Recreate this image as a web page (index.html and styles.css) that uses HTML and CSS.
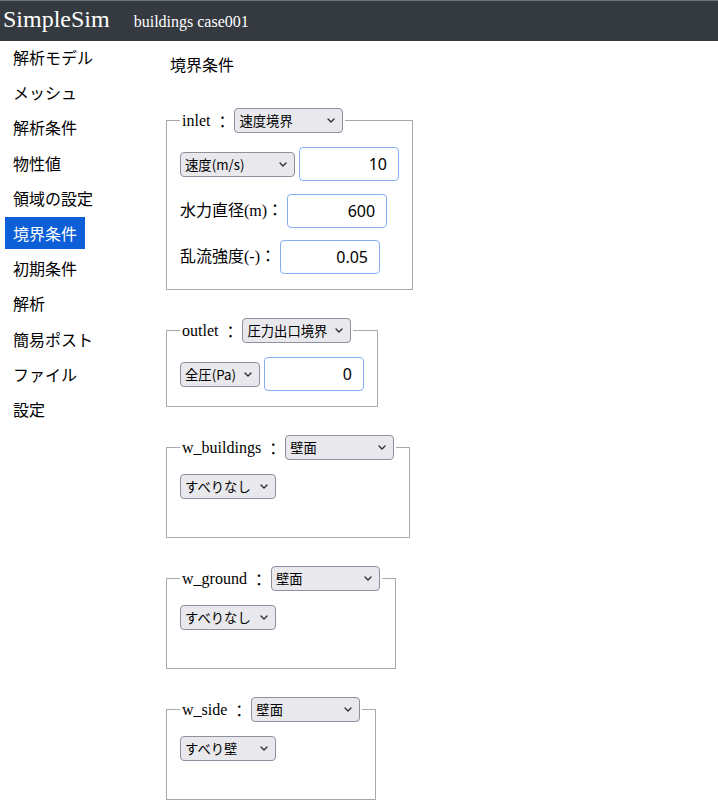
FILE: index.html
```html
<!DOCTYPE html>
<html lang="ja">
<head>
<meta charset="utf-8">
<title>SimpleSim</title>
<link rel="stylesheet" href="styles.css">
</head>
<body>
<header class="topbar">
  <span class="brand">SimpleSim</span>
  <span class="case-name">buildings case001</span>
</header>
<div class="layout">
  <nav class="sidenav">
    <a class="nav-item">解析モデル</a>
    <a class="nav-item">メッシュ</a>
    <a class="nav-item">解析条件</a>
    <a class="nav-item">物性値</a>
    <a class="nav-item">領域の設定</a>
    <a class="nav-item active">境界条件</a>
    <a class="nav-item">初期条件</a>
    <a class="nav-item">解析</a>
    <a class="nav-item">簡易ポスト</a>
    <a class="nav-item">ファイル</a>
    <a class="nav-item">設定</a>
  </nav>
  <main class="content">
    <h1 class="page-title">境界条件</h1>

    <fieldset class="bc">
      <legend class="bc-legend">
        <span class="bc-name">inlet</span><span class="colon">：</span>
        <span class="sel sel-type"><select><option>速度境界</option></select><svg class="chev" width="8" height="5" viewBox="0 0 8 5"><path d="M1 1 L4 4 L7 1"/></svg></span>
      </legend>
      <div class="bc-body">
        <div class="row">
          <span class="sel sel-w115"><select><option>速度(m/s)</option></select><svg class="chev" width="8" height="5" viewBox="0 0 8 5"><path d="M1 1 L4 4 L7 1"/></svg></span>
          <input class="num" type="text" value="10">
        </div>
        <div class="row">
          <label class="lbl">水力直径(m)：</label>
          <input class="num" type="text" value="600">
        </div>
        <div class="row">
          <label class="lbl">乱流強度(-)：</label>
          <input class="num" type="text" value="0.05">
        </div>
      </div>
    </fieldset>

    <fieldset class="bc">
      <legend class="bc-legend">
        <span class="bc-name">outlet</span><span class="colon">：</span>
        <span class="sel sel-type"><select><option>圧力出口境界</option></select><svg class="chev" width="8" height="5" viewBox="0 0 8 5"><path d="M1 1 L4 4 L7 1"/></svg></span>
      </legend>
      <div class="bc-body">
        <div class="row">
          <span class="sel sel-w80"><select><option>全圧(Pa)</option></select><svg class="chev" width="8" height="5" viewBox="0 0 8 5"><path d="M1 1 L4 4 L7 1"/></svg></span>
          <input class="num" type="text" value="0">
        </div>
      </div>
    </fieldset>

    <fieldset class="bc">
      <legend class="bc-legend">
        <span class="bc-name">w_buildings</span><span class="colon">：</span>
        <span class="sel sel-type"><select><option>壁面</option></select><svg class="chev" width="8" height="5" viewBox="0 0 8 5"><path d="M1 1 L4 4 L7 1"/></svg></span>
      </legend>
      <div class="bc-body bc-body-wall">
        <div class="row">
          <span class="sel sel-w96"><select><option>すべりなし</option></select><svg class="chev" width="8" height="5" viewBox="0 0 8 5"><path d="M1 1 L4 4 L7 1"/></svg></span>
        </div>
      </div>
    </fieldset>

    <fieldset class="bc">
      <legend class="bc-legend">
        <span class="bc-name">w_ground</span><span class="colon">：</span>
        <span class="sel sel-type"><select><option>壁面</option></select><svg class="chev" width="8" height="5" viewBox="0 0 8 5"><path d="M1 1 L4 4 L7 1"/></svg></span>
      </legend>
      <div class="bc-body bc-body-wall">
        <div class="row">
          <span class="sel sel-w96"><select><option>すべりなし</option></select><svg class="chev" width="8" height="5" viewBox="0 0 8 5"><path d="M1 1 L4 4 L7 1"/></svg></span>
        </div>
      </div>
    </fieldset>

    <fieldset class="bc">
      <legend class="bc-legend">
        <span class="bc-name">w_side</span><span class="colon">：</span>
        <span class="sel sel-type"><select><option>壁面</option></select><svg class="chev" width="8" height="5" viewBox="0 0 8 5"><path d="M1 1 L4 4 L7 1"/></svg></span>
      </legend>
      <div class="bc-body bc-body-wall">
        <div class="row">
          <span class="sel sel-w96"><select><option>すべり壁</option></select><svg class="chev" width="8" height="5" viewBox="0 0 8 5"><path d="M1 1 L4 4 L7 1"/></svg></span>
        </div>
      </div>
    </fieldset>
  </main>
</div>
</body>
</html>
```

FILE: styles.css
```css
* {
  box-sizing: border-box;
}

html, body {
  margin: 0;
  padding: 0;
  background: #ffffff;
}

body {
  font-family: "Liberation Serif", "Noto Sans CJK JP", serif;
  font-size: 16px;
  color: #000000;
}

.topbar {
  height: 41px;
  background: #343a40;
  border-top: 1px solid #70757a;
  display: flex;
  align-items: baseline;
  padding-left: 3px;
  padding-top: 3px;
  color: #ffffff;
}

.brand {
  font-size: 24px;
  line-height: 30px;
}

.case-name {
  font-size: 16px;
  margin-left: 24px;
}

.layout {
  display: flex;
  align-items: flex-start;
}

.sidenav {
  width: 166px;
  flex: none;
  padding: 0 0 0 5px;
  display: flex;
  flex-direction: column;
  align-items: flex-start;
  gap: 3.2px;
}

.nav-item {
  display: block;
  height: 32px;
  line-height: 32px;
  padding: 0 8px;
  font-family: "Noto Sans CJK JP", sans-serif;
  font-size: 16px;
  color: #000000;
  text-decoration: none;
}

.nav-item.active {
  background: #0d5fd8;
  color: #ffffff;
}

.content {
  display: flex;
  flex-direction: column;
  align-items: flex-start;
}

.page-title {
  margin: 11px 0 32px 4px;
  font-family: "Noto Sans CJK JP", sans-serif;
  font-size: 16px;
  font-weight: normal;
  line-height: 24px;
}

.bc {
  margin: 0 0 28px 0;
  padding: 14px 13px 15px 13px;
  border: 1px solid #a9a9a9;
  min-width: 0;
}

.bc-legend {
  padding: 0 2px;
  height: 25px;
  display: flex;
  align-items: center;
  white-space: nowrap;
}

.bc-name {
  font-family: "Liberation Serif", serif;
  font-size: 16px;
}

.colon {
  font-family: "Noto Sans CJK JP", sans-serif;
  font-size: 16px;
  line-height: 20px;
  margin: 0 4px;
}

.bc-body {
  display: flex;
  flex-direction: column;
  gap: 12.5px;
}

.bc-body-wall {
  padding-bottom: 23px;
}

.row {
  display: flex;
  align-items: center;
  gap: 4px;
}

.lbl {
  font-family: "Liberation Serif", "Noto Sans CJK JP", serif;
  font-size: 16px;
  line-height: 20px;
  white-space: nowrap;
}

.sel {
  position: relative;
  display: inline-block;
  height: 25px;
}

.sel select {
  appearance: none;
  -webkit-appearance: none;
  display: block;
  width: 100%;
  height: 25px;
  margin: 0;
  padding: 0 18px 0 4px;
  background: #e9e9ed;
  border: 1px solid #8f8f9d;
  border-radius: 4px;
  color: #000000;
  font-family: "Noto Sans CJK JP", sans-serif;
  font-size: 13.33px;
  line-height: 23px;
}

.chev {
  position: absolute;
  right: 8px;
  top: 10px;
  pointer-events: none;
}

.chev path {
  fill: none;
  stroke: #2b2b2b;
  stroke-width: 1.3;
  stroke-linecap: round;
  stroke-linejoin: round;
}

.sel-type { width: 109px; }
.sel-w115 { width: 115px; }
.sel-w80 { width: 80px; }
.sel-w96 { width: 96px; }

.num {
  width: 100px;
  height: 34px;
  margin: 0;
  padding: 0 11px 0 6px;
  border: 1px solid #88aef2;
  border-radius: 4px;
  background: #ffffff;
  color: #000000;
  text-align: right;
  font-family: "Noto Sans", "Noto Sans CJK JP", sans-serif;
  font-size: 16px;
}
```
